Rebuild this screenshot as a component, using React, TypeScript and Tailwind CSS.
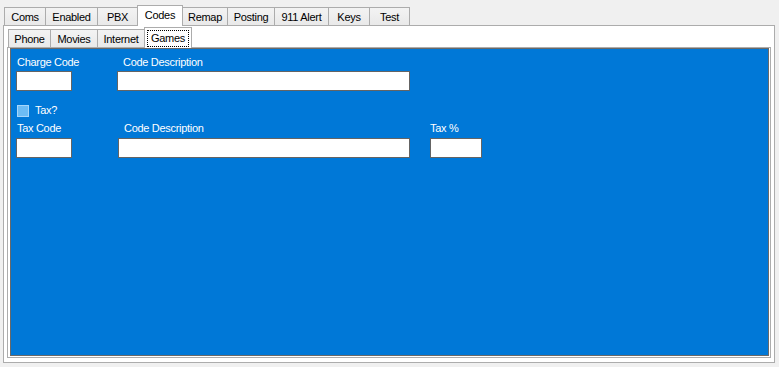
const outerTabs = [
  { label: "Coms", w: "w-[42px]" },
  { label: "Enabled", w: "w-[53px]" },
  { label: "PBX", w: "w-[41px]" },
  { label: "Codes", w: "w-[46px]", active: true },
  { label: "Remap", w: "w-[46px]" },
  { label: "Posting", w: "w-[48px]" },
  { label: "911 Alert", w: "w-[55px]" },
  { label: "Keys", w: "w-[42px]" },
  { label: "Test", w: "w-[41px]", last: true },
];

const innerTabs = [
  { label: "Phone", w: "w-[43px]" },
  { label: "Movies", w: "w-[48px]" },
  { label: "Internet", w: "w-[48px]" },
  { label: "Games", w: "w-[48px]", active: true, last: true },
];

type Tab = { label: string; w: string; active?: boolean; last?: boolean };

function TabButton({ tab, small }: { tab: Tab; small?: boolean }) {
  if (tab.active) {
    return (
      <div
        className={`${tab.w} h-[21px] -mb-px bg-white border border-b-0 border-[#acacac] flex justify-center pt-[2px] relative z-10 ${
          tab.last ? "" : "-mr-px"
        }`}
      >
        {small ? (
          <span className="border border-dotted border-black px-[3px] h-[17px] leading-[15px]">
            {tab.label}
          </span>
        ) : (
          <span className="leading-[13px] pt-[1px]">{tab.label}</span>
        )}
      </div>
    );
  }
  return (
    <div
      className={`${tab.w} h-[18px] bg-gradient-to-b from-[#f3f3f3] to-[#e9e9e9] border border-b-0 border-[#acacac] flex justify-center pt-[3px] leading-[13px] ${
        tab.last ? "" : "-mr-px"
      }`}
    >
      {tab.label}
    </div>
  );
}

function TextBox({ w }: { w: string }) {
  return <div className={`${w} h-[20px] bg-white border border-[#646464]`} />;
}

export default function App() {
  return (
    <div className="w-[779px] h-[367px] bg-[#f0f0f0] pt-[5px] font-['Liberation_Sans',Arial,sans-serif] text-[11px] tracking-[-0.3px] text-black">
      <div className="flex items-end h-[20px] pl-[4px]">
        {outerTabs.map((t) => (
          <TabButton key={t.label} tab={t} />
        ))}
      </div>
      <div className="ml-[3px] w-[772px] h-[338px] border border-[#acacac] bg-white px-[3px] pt-[1px] flex flex-col">
        <div className="flex items-end h-[20px] pl-[1px]">
          {innerTabs.map((t) => (
            <TabButton key={t.label} tab={t} small />
          ))}
        </div>
        <div className="h-[311px] border border-[#acacac] bg-white pl-[2px] pr-px pb-px flex">
          <div className="flex-1 bg-[#0078d7] border border-[#696969] text-white">
            <div className="flex gap-[45px] pl-[5px] pt-[7px]">
              <div className="w-[56px] flex flex-col">
                <span className="ml-px leading-[13px] whitespace-nowrap">Charge Code</span>
                <div className="mt-[2px]">
                  <TextBox w="w-[56px]" />
                </div>
              </div>
              <div className="w-[293px] flex flex-col">
                <span className="ml-[6px] leading-[13px]">Code Description</span>
                <div className="mt-[2px]">
                  <TextBox w="w-[293px]" />
                </div>
              </div>
            </div>
            <div className="flex items-center gap-[6px] pl-[6px] mt-[13px] h-[13px]">
              <div className="w-[12px] h-[12px] bg-[#6cbcf5] border border-[#a6d6fb]" />
              <span className="leading-[13px]">Tax?</span>
            </div>
            <div className="flex pl-[5px] mt-[5px]">
              <div className="w-[56px] flex flex-col">
                <span className="ml-px leading-[13px]">Tax Code</span>
                <div className="mt-[3px]">
                  <TextBox w="w-[56px]" />
                </div>
              </div>
              <div className="w-[292px] ml-[46px] flex flex-col">
                <span className="ml-[6px] leading-[13px]">Code Description</span>
                <div className="mt-[3px]">
                  <TextBox w="w-[292px]" />
                </div>
              </div>
              <div className="w-[52px] ml-[20px] flex flex-col">
                <span className="leading-[13px]">Tax %</span>
                <div className="mt-[3px]">
                  <TextBox w="w-[52px]" />
                </div>
              </div>
            </div>
          </div>
        </div>
      </div>
    </div>
  );
}
